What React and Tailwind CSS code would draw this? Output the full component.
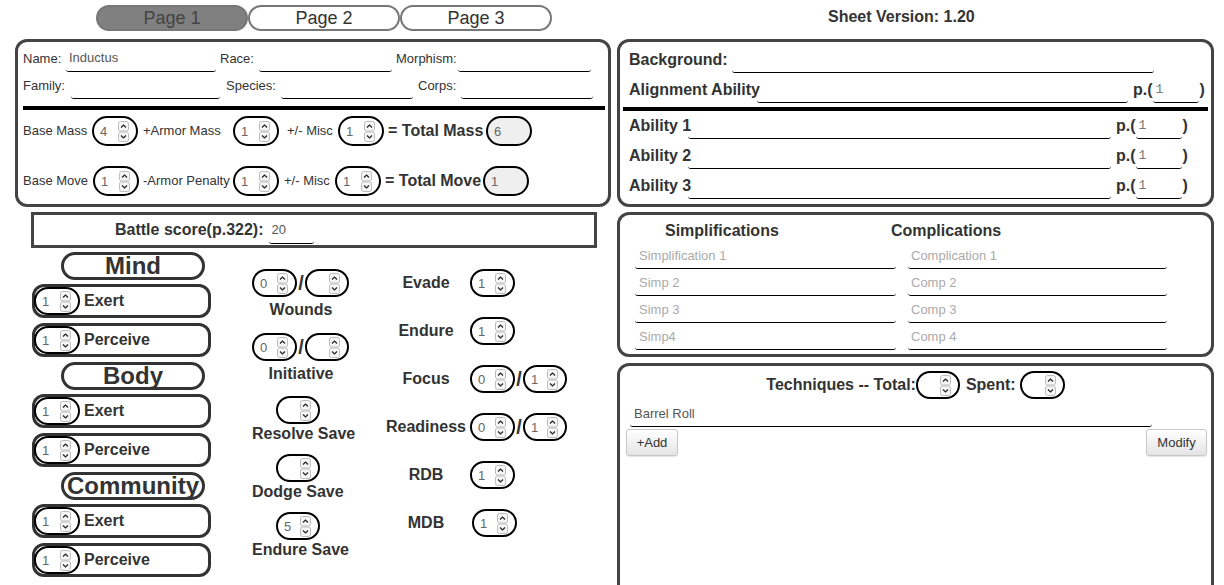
import React from 'react';

function Arrows() {
  return (
    <svg width="11" height="21" viewBox="0 0 11 21" className="shrink-0">
      <rect x="0.5" y="0.5" width="10" height="9.5" rx="2" fill="#f6f6f6" stroke="#bdbdbd" />
      <rect x="0.5" y="11" width="10" height="9.5" rx="2" fill="#f6f6f6" stroke="#bdbdbd" />
      <path d="M3 6.5 L5.5 4 L8 6.5" fill="none" stroke="#222" strokeWidth="1.2" />
      <path d="M3 14.5 L5.5 17 L8 14.5" fill="none" stroke="#222" strokeWidth="1.2" />
    </svg>
  );
}

function Spin({ value = '', w = 'w-[46px]', h = 'h-[28px]', filled = false, arrows = true, className = '' }) {
  return (
    <div
      className={`flex ${w} ${h} shrink-0 items-center rounded-full border-2 border-black pl-[6px] pr-[7px] ${
        filled ? 'bg-[#efefef]' : 'bg-white'
      } ${className}`}
    >
      <span className="flex-1 text-[13px] leading-none text-[#666]">{value}</span>
      {arrows && <Arrows />}
    </div>
  );
}

function Line({ w, h = 'h-full', value = '', placeholder = '', mono = false, className = '' }) {
  return (
    <div
      className={`flex ${w} ${h} shrink-0 items-center rounded-[3px] border-b border-black pl-[3px] text-[13px] ${
        mono ? "font-['Liberation_Mono',monospace] text-[12px] text-[#777]" : 'text-[#555]'
      } ${className}`}
    >
      {value ? value : <span className="text-[#aaa]">{placeholder}</span>}
    </div>
  );
}

function Tab({ active, children }) {
  return (
    <div
      className={`flex h-[26px] w-[152px] items-center justify-center rounded-full border-2 border-[#777] text-[18px] ${
        active ? 'bg-[#808080] text-[#444]' : 'bg-white text-[#333]'
      }`}
    >
      {children}
    </div>
  );
}

function StatBox({ label, className = '' }) {
  return (
    <div className={`flex h-[34px] w-[179px] items-center rounded-[12px] border-[3px] border-[#333] ${className}`}>
      <Spin value="1" className="-ml-[1px]" />
      <span className="ml-[4px] text-[16px] font-bold">{label}</span>
    </div>
  );
}

function Pair({ a = '', b = '', className = '' }) {
  return (
    <div className={`flex items-center ${className}`}>
      <Spin value={a} w="w-[45px]" />
      <span className="w-[8px] text-center text-[20px] font-bold leading-none">/</span>
      <Spin value={b} w="w-[44px]" />
    </div>
  );
}

function Row({ label, children }) {
  return (
    <div className="flex h-[48px] items-center">
      <span className="w-[82px] text-center text-[16px] font-bold">{label}</span>
      <div className="ml-[3px]">{children}</div>
    </div>
  );
}

function PageRef() {
  return (
    <>
      <span className="ml-[5px] whitespace-nowrap text-[16px] font-bold">p.(</span>
      <Line w="w-[46px]" value="1" mono />
      <span className="ml-[1px] text-[16px] font-bold">)</span>
    </>
  );
}

export default function App() {
  return (
    <div className="flex h-[585px] w-[1224px] overflow-hidden bg-white font-['Liberation_Sans',Arial,sans-serif] text-[#333]">
      {/* left half */}
      <div className="w-[612px] shrink-0">
        <div className="flex h-[39px] pl-[96px] pt-[5px]">
          <Tab active>Page 1</Tab>
          <Tab>Page 2</Tab>
          <Tab>Page 3</Tab>
        </div>

        <div className="ml-[15px] h-[168px] w-[596px] rounded-[12px] border-[3px] border-[#444] pl-[5px] pr-[3px] pt-[3px]">
          <div className="flex h-[27px] items-center text-[13px]">
            <span className="w-[43px]">Name:</span>
            <Line w="w-[150px]" value="Inductus" />
            <span className="ml-[4px] w-[39px]">Race:</span>
            <Line w="w-[133px]" />
            <span className="ml-[4px] w-[62px]">Morphism:</span>
            <Line w="w-[133px]" />
          </div>
          <div className="flex h-[27px] items-center text-[13px]">
            <span className="w-[48px]">Family:</span>
            <Line w="w-[149px]" />
            <span className="ml-[6px] w-[55px]">Species:</span>
            <Line w="w-[132px]" />
            <span className="ml-[5px] w-[43px]">Corps:</span>
            <Line w="w-[132px]" />
          </div>
          <div className="mt-[7px] h-[4px] bg-black" />
          <div className="mt-[6px] flex h-[30px] items-center whitespace-nowrap text-[13px]">
            <span className="w-[69px]">Base Mass</span>
            <Spin value="4" h="h-[30px]" />
            <span className="w-[95px] pl-[5px]">+Armor Mass</span>
            <Spin value="1" h="h-[30px]" />
            <span className="w-[59px] pl-[8px]">+/- Misc</span>
            <Spin value="1" h="h-[30px]" />
            <span className="w-[102px] pl-[4px] text-[16px] font-bold">= Total Mass</span>
            <Spin value="6" h="h-[30px]" filled arrows={false} />
          </div>
          <div className="mt-[20px] flex h-[30px] items-center whitespace-nowrap text-[13px]">
            <span className="w-[70px]">Base Move</span>
            <Spin value="1" h="h-[30px]" />
            <span className="w-[94px] pl-[4px]">-Armor Penalty</span>
            <Spin value="1" h="h-[30px]" />
            <span className="w-[56px] pl-[5px]">+/- Misc</span>
            <Spin value="1" h="h-[30px]" />
            <span className="w-[102px] pl-[4px] text-[16px] font-bold">= Total Move</span>
            <Spin value="1" h="h-[30px]" filled arrows={false} />
          </div>
        </div>

        <div className="ml-[31px] mt-[5px] flex h-[36px] w-[566px] items-center border-[3px] border-[#444] pl-[81px]">
          <span className="text-[16px] font-bold">Battle score(p.322):</span>
          <Line w="w-[45px]" h="h-[28px]" value="20" className="ml-[5px]" />
        </div>

        <div className="flex">
          <div className="ml-[32px] w-[179px] shrink-0 pt-[4px]">
            {['Mind', 'Body', 'Community'].map((g, i) => (
              <div key={g} className={i ? 'mt-[5px]' : ''}>
                <div className="ml-[29px] flex h-[28px] w-[144px] items-center justify-center rounded-full border-[3px] border-[#333] text-[24px] font-bold leading-none">
                  {g}
                </div>
                <StatBox label="Exert" className="mt-[4px]" />
                <StatBox label="Perceive" className="mt-[5px]" />
              </div>
            ))}
          </div>

          <div className="ml-[39px] w-[102px] shrink-0 pt-[21px]">
            <Pair a="0" className="pl-[2px]" />
            <div className="mt-[3px] text-center text-[16px] font-bold leading-[19px]">Wounds</div>
            <Pair a="0" className="mt-[14px] pl-[2px]" />
            <div className="mt-[3px] text-center text-[16px] font-bold leading-[19px]">Initiative</div>
            <Spin w="w-[44px]" className="ml-[26px] mt-[13px]" />
            <div className="pl-[2px] text-[16px] font-bold leading-[19px] whitespace-nowrap">Resolve Save</div>
            <Spin w="w-[44px]" className="ml-[26px] mt-[11px]" />
            <div className="pl-[2px] text-[16px] font-bold leading-[19px] whitespace-nowrap">Dodge Save</div>
            <Spin value="5" w="w-[44px]" className="ml-[26px] mt-[11px]" />
            <div className="pl-[2px] text-[16px] font-bold leading-[19px] whitespace-nowrap">Endure Save</div>
          </div>

          <div className="ml-[33px] pt-[11px]">
            <Row label="Evade">
              <Spin value="1" w="w-[45px]" />
            </Row>
            <Row label="Endure">
              <Spin value="1" w="w-[45px]" />
            </Row>
            <Row label="Focus">
              <Pair a="0" b="1" />
            </Row>
            <Row label="Readiness">
              <Pair a="0" b="1" />
            </Row>
            <Row label="RDB">
              <Spin value="1" w="w-[45px]" />
            </Row>
            <Row label="MDB">
              <Spin value="1" w="w-[45px]" className="ml-[2px]" />
            </Row>
          </div>
        </div>
      </div>

      {/* right half */}
      <div className="flex-1">
        <div className="h-[39px] pl-[216px] pt-[5px] text-[16px] font-bold">Sheet Version: 1.20</div>

        <div className="ml-[5px] h-[168px] w-[597px] rounded-[12px] border-[3px] border-[#444] px-[3px] pt-[5px]">
          <div className="flex h-[26px] items-center pl-[6px]">
            <span className="w-[103px] text-[16px] font-bold">Background:</span>
            <Line w="w-[422px]" />
          </div>
          <div className="mt-[4px] flex h-[26px] items-center pl-[6px]">
            <span className="w-[128px] whitespace-nowrap text-[16px] font-bold">Alignment Ability</span>
            <Line w="w-[371px]" />
            <PageRef />
          </div>
          <div className="mt-[4px] h-[4px] bg-black" />
          {['Ability 1', 'Ability 2', 'Ability 3'].map((a, i) => (
            <div key={a} className={`flex h-[26px] items-center pl-[6px] ${i ? 'mt-[4px]' : 'mt-[2px]'}`}>
              <span className="w-[59px] whitespace-nowrap text-[16px] font-bold">{a}</span>
              <Line w="w-[423px]" />
              <PageRef />
            </div>
          ))}
        </div>

        <div className="ml-[5px] mt-[5px] h-[145px] w-[597px] rounded-[12px] border-[3px] border-[#444] pt-[4px]">
          <div className="flex h-[24px] items-center pl-[45px] text-[16px] font-bold">
            <span className="w-[226px]">Simplifications</span>
            <span>Complications</span>
          </div>
          {[
            ['Simplification 1', 'Complication 1'],
            ['Simp 2', 'Comp 2'],
            ['Simp 3', 'Comp 3'],
            ['Simp4', 'Comp 4'],
          ].map(([s, c], i) => (
            <div key={s} className={`flex h-[26px] pl-[15px] ${i ? 'mt-[1px]' : ''}`}>
              <Line w="w-[261px]" placeholder={s} className="pl-[4px]" />
              <Line w="w-[259px]" placeholder={c} className="ml-[12px]" />
            </div>
          ))}
        </div>

        <div className="ml-[5px] mt-[6px] h-[300px] w-[597px] rounded-[12px] border-[3px] border-[#444] pt-[5px]">
          <div className="flex h-[28px] items-center justify-center text-[16px] font-bold">
            <span>Techniques -- Total:</span>
            <Spin w="w-[44px]" />
            <span className="ml-[6px]">Spent:</span>
            <Spin w="w-[45px]" className="ml-[4px]" />
          </div>
          <Line w="w-[522px]" h="h-[26px]" value="Barrel Roll" className="ml-[10px] mt-[2px] pl-[4px] text-[#444]" />
          <div className="mt-[2px] flex justify-between pl-[6px] pr-[4px]">
            <button className="h-[27px] w-[52px] rounded-[3px] border border-[#c8c8c8] bg-linear-to-b from-white to-[#e4e4e4] text-[13px] text-[#333] shadow-[0_1px_1px_rgba(0,0,0,0.1)]">
              +Add
            </button>
            <button className="h-[27px] w-[61px] rounded-[3px] border border-[#c8c8c8] bg-linear-to-b from-white to-[#e4e4e4] text-[13px] text-[#333] shadow-[0_1px_1px_rgba(0,0,0,0.1)]">
              Modify
            </button>
          </div>
        </div>
      </div>
    </div>
  );
}
